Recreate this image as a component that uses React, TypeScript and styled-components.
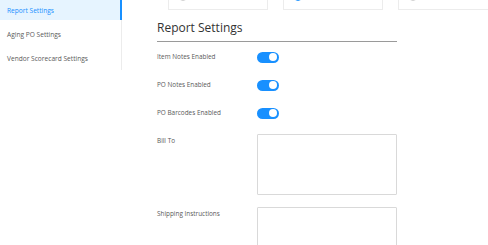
import React, { useState } from 'react';
import styled, { createGlobalStyle } from 'styled-components';

const GlobalStyle = createGlobalStyle`
  html, body {
    margin: 0;
    padding: 0;
    background: #fff;
    font-family: "Open Sans", "Liberation Sans", sans-serif;
    overflow: hidden;
  }
`;

const Page = styled.div`
  display: flex;
  align-items: flex-start;
  width: 488px;
  height: 245px;
  overflow: hidden;
`;

const Sidebar = styled.nav`
  width: 121px;
  flex-shrink: 0;
  border-right: 1px solid #ececec;
  display: flex;
  flex-direction: column;
  gap: 4px;
  padding-bottom: 2px;
`;

const NavItem = styled.div<{ $active?: boolean }>`
  height: 20px;
  display: flex;
  align-items: center;
  padding-left: 7px;
  font-size: 6.6px;
  color: ${p => (p.$active ? '#1890ff' : '#595959')};
  background: ${p => (p.$active ? '#e6f4ff' : 'transparent')};
  box-shadow: ${p => (p.$active ? 'inset -2px 0 0 #1890ff' : 'none')};
  margin-right: -1px;
  cursor: pointer;
`;

const Main = styled.main`
  flex: 1;
  padding-left: 35px;
  display: flex;
  flex-direction: column;
`;

const CardRow = styled.div`
  display: flex;
  gap: 15px;
  padding-left: 11px;
  margin-top: -18px;
`;

const Card = styled.div`
  width: 100px;
  height: 28px;
  flex-shrink: 0;
  border: 1px solid #ececec;
  border-top: none;
  display: flex;
  align-items: flex-end;
  padding: 0 0 7px 10px;
  box-sizing: border-box;
  gap: 5px;
  font-size: 6.6px;
  line-height: 9px;
  color: #595959;
`;

const Radio = styled.span<{ $checked?: boolean }>`
  width: 6px;
  height: 6px;
  margin-bottom: 1px;
  border-radius: 50%;
  border: 1px solid ${p => (p.$checked ? '#1890ff' : '#d0d0d0')};
`;

const Heading = styled.h2`
  margin: 10px 0 0;
  width: 240px;
  font-size: 12px;
  font-weight: 400;
  line-height: 16px;
  color: #333;
  padding-bottom: 5px;
  border-bottom: 1px solid #9a9a9a;
`;

const Form = styled.div`
  display: flex;
  flex-direction: column;
  width: 240px;
  padding-top: 8px;
`;

const Row = styled.div<{ $tall?: boolean }>`
  display: flex;
  align-items: ${p => (p.$tall ? 'flex-start' : 'center')};
  margin-bottom: ${p => (p.$tall ? '12px' : '14px')};
  min-height: 14px;
`;

const Label = styled.label`
  width: 100px;
  flex-shrink: 0;
  font-size: 6.4px;
  line-height: 14px;
  color: #595959;
`;

const Switch = styled.button<{ $on: boolean }>`
  position: relative;
  width: 22px;
  height: 11px;
  border: none;
  padding: 0;
  border-radius: 6px;
  background: ${p => (p.$on ? '#1890ff' : '#bfbfbf')};
  cursor: pointer;

  &::after {
    content: '';
    position: absolute;
    top: 1.5px;
    left: ${p => (p.$on ? '12px' : '1.5px')};
    width: 8px;
    height: 8px;
    border-radius: 50%;
    background: #fff;
  }
`;

const TextBox = styled.textarea`
  width: 140px;
  height: 61px;
  box-sizing: border-box;
  border: 1px solid #d9d9d9;
  border-radius: 1px;
  resize: none;
  padding: 3px;
  font-family: inherit;
  font-size: 7px;
  outline: none;
`;

const toggles = ['Item Notes Enabled', 'PO Notes Enabled', 'PO Barcodes Enabled'];

export default function App() {
  const [on, setOn] = useState([true, true, true]);

  return (
    <>
      <GlobalStyle />
      <Page>
        <Sidebar>
          <NavItem $active>Report Settings</NavItem>
          <NavItem>Aging PO Settings</NavItem>
          <NavItem>Vendor Scorecard Settings</NavItem>
        </Sidebar>
        <Main>
          <CardRow>
            <Card><Radio />Make Default</Card>
            <Card><Radio $checked />Make Default</Card>
            <Card><Radio />Make Default</Card>
          </CardRow>
          <Heading>Report Settings</Heading>
          <Form>
            {toggles.map((t, i) => (
              <Row key={t}>
                <Label>{t}</Label>
                <Switch
                  $on={on[i]}
                  onClick={() => setOn(o => o.map((v, j) => (j === i ? !v : v)))}
                />
              </Row>
            ))}
            <Row $tall>
              <Label>Bill To</Label>
              <TextBox />
            </Row>
            <Row $tall>
              <Label>Shipping Instructions</Label>
              <TextBox />
            </Row>
          </Form>
        </Main>
      </Page>
    </>
  );
}
